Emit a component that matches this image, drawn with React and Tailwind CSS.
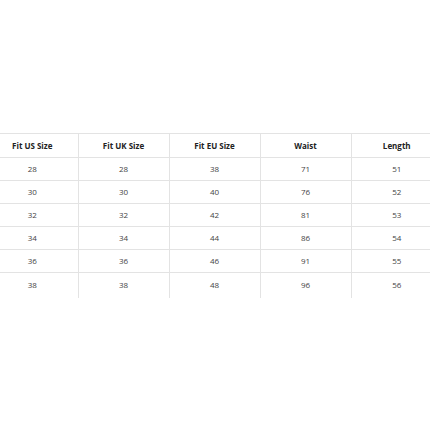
import React from 'react';

const headers = ['Fit US Size', 'Fit UK Size', 'Fit EU Size', 'Waist', 'Length'];

const rows = [
  ['28', '28', '38', '71', '51'],
  ['30', '30', '40', '76', '52'],
  ['32', '32', '42', '81', '53'],
  ['34', '34', '44', '86', '54'],
  ['36', '36', '46', '91', '55'],
  ['38', '38', '48', '96', '56'],
];

const App = () => {
  return (
    <div
      className="h-[430px] w-[430px] overflow-hidden bg-white pt-[133px]"
      style={{ fontFamily: '"Open Sans", "Noto Sans", sans-serif' }}
    >
      <table className="ml-[-13px] w-[455px] table-fixed border-collapse">
        <thead>
          <tr className="h-[24px] border-t border-b border-[#e3e3e3]">
            {headers.map((h, i) => (
              <th
                key={h}
                className={`p-0 text-center align-middle text-[8px] font-bold text-[#222] ${i > 0 ? 'border-l border-[#e3e3e3]' : ''}`}
              >
                {h}
              </th>
            ))}
          </tr>
        </thead>
        <tbody>
          {rows.map((row, r) => {
            const last = r === rows.length - 1;
            return (
              <tr
                key={r}
                className={last ? 'h-[25px]' : 'h-[23px] border-b border-[#e3e3e3]'}
              >
                {row.map((v, i) => (
                  <td
                    key={i}
                    className={`p-0 text-center align-middle text-[8px] text-[#444] ${i > 0 ? 'border-l border-[#e3e3e3]' : ''}`}
                  >
                    {v}
                  </td>
                ))}
              </tr>
            );
          })}
        </tbody>
      </table>
    </div>
  );
};

export default App;
